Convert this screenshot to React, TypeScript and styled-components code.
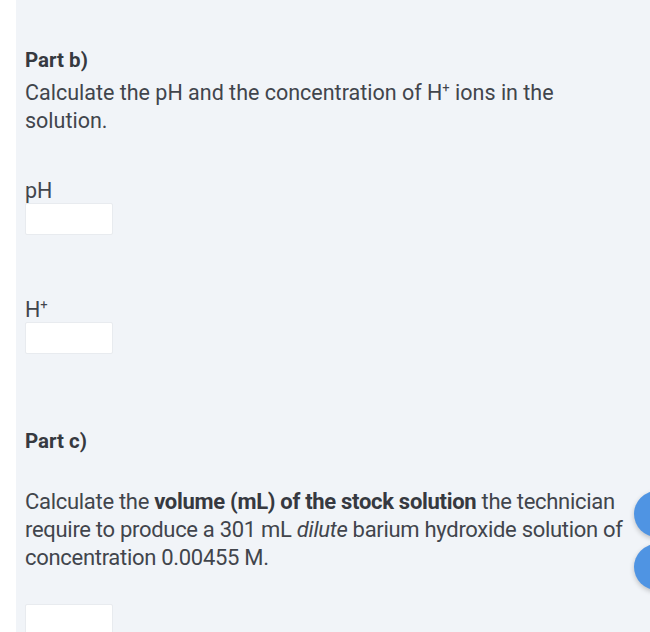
import styled, { createGlobalStyle } from 'styled-components'

const Global = createGlobalStyle`
  html, body {
    margin: 0;
    padding: 0;
    background: #ffffff;
  }
  body {
    font-family: Roboto, 'Noto Sans', sans-serif;
    color: #41454c;
  }
`

const Page = styled.div`
  width: 650px;
  height: 632px;
  overflow: hidden;
  position: relative;
  padding-left: 16px;
  box-sizing: border-box;
`

const Panel = styled.div`
  background: #f1f4f8;
  height: 100%;
  padding: 46px 0 0 9px;
  box-sizing: border-box;
  font-size: 21.5px;
  line-height: 28px;
`

const PartTitle = styled.h3<{ $top?: number }>`
  margin: ${({ $top }) => $top ?? 0}px 0 0;
  font-size: 20.5px;
  font-weight: 700;
  line-height: 28px;
  color: #363940;
`

const Question = styled.p<{ $top?: number; $width: number; $size: number; $spacing: number }>`
  margin: ${({ $top }) => $top ?? 0}px 0 0;
  max-width: ${({ $width }) => $width}px;
  font-size: ${({ $size }) => $size}px;
  letter-spacing: ${({ $spacing }) => $spacing}px;

  b {
    font-weight: 700;
    color: #363940;
  }
  i {
    font-style: italic;
  }
`

const Sup = styled.span`
  font-size: 13px;
  line-height: 0;
  position: relative;
  top: -0.6em;
`

const Field = styled.div<{ $top: number }>`
  display: flex;
  flex-direction: column;
  gap: 0;
  margin-top: ${({ $top }) => $top}px;
`

const Label = styled.span`
  display: block;
  height: 24px;
  line-height: 24px;
  font-size: 21.5px;
`

const Input = styled.div`
  width: 88px;
  height: 32px;
  box-sizing: border-box;
  background: #ffffff;
  border: 1px solid #e8ebef;
  border-radius: 2px;
`

const Fab = styled.div<{ $top: number }>`
  position: absolute;
  left: 634px;
  top: ${({ $top }) => $top}px;
  width: 46px;
  height: 46px;
  border-radius: 50%;
  background: #4f94e3;
  box-shadow: 0 2px 5px rgba(0, 0, 0, 0.22);
`

export default function App() {
  return (
    <>
      <Global />
      <Page>
        <Panel>
          <PartTitle>Part b)</PartTitle>
          <Question $top={5} $width={580} $size={21.5} $spacing={0}>
            Calculate the pH and the concentration of H<Sup>+</Sup> ions in the solution.
          </Question>
          <Field $top={44}>
            <Label>pH</Label>
            <Input />
          </Field>
          <Field $top={63}>
            <Label>
              H<Sup>+</Sup>
            </Label>
            <Input />
          </Field>
          <PartTitle $top={73}>Part c)</PartTitle>
          <Question $top={33} $width={605} $size={22} $spacing={-0.3}>
            Calculate the <b>volume (mL) of the stock solution</b> the technician require to produce a 301 mL{' '}
            <i>dilute</i> barium hydroxide solution of concentration 0.00455 M.
          </Question>
          <Field $top={32}>
            <Input />
          </Field>
        </Panel>
        <Fab $top={491} />
        <Fab $top={544} />
      </Page>
    </>
  )
}
